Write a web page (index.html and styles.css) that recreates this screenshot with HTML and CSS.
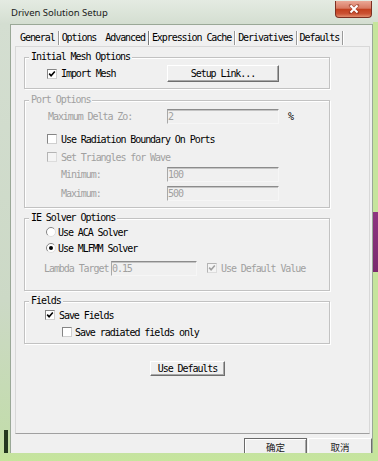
FILE: index.html
```html
<!DOCTYPE html>
<html lang="en">
<head>
    <meta charset="UTF-8">
    <meta name="viewport" content="width=device-width, initial-scale=1.0">
    <title>Driven Solution Setup</title>
    <link rel="stylesheet" href="styles.css">
</head>
<body>
    <div class="window">
        <div class="titlebar">
            <span class="title">Driven Solution Setup</span>
            <div class="close-btn">
                <svg width="12" height="10" viewBox="0 0 12 10">
                    <path d="M2.5 1.5 L9.5 8.5 M9.5 1.5 L2.5 8.5" stroke="#7a2414" stroke-width="3.4" stroke-linecap="round" opacity="0.45"/>
                    <path d="M2.5 1.5 L9.5 8.5 M9.5 1.5 L2.5 8.5" stroke="#fff" stroke-width="2"/>
                </svg>
            </div>
        </div>

        <div class="client">
            <div class="tabs">
                <span class="tab">General</span>
                <span class="tab tab-plain">Options</span>
                <span class="tab tab-active">Advanced</span>
                <span class="tab">Expression Cache</span>
                <span class="tab">Derivatives</span>
                <span class="tab">Defaults</span>
            </div>

            <div class="page">
                <!-- Initial mesh -->
                <div class="group group-mesh">
                    <span class="legend">Initial Mesh Options</span>
                    <div class="row row-tall">
                        <label class="check label-col indent-22">
                            <span class="box"><svg width="8" height="8" viewBox="0 0 8 8"><path d="M1.2 3.6 L3.1 5.7 L6.8 1.5" fill="none" stroke="#000" stroke-width="1.6"/></svg></span>Import Mesh
                        </label>
                        <button class="btn btn-setup">Setup Link...</button>
                    </div>
                </div>

                <!-- Port options (disabled) -->
                <div class="group group-port">
                    <span class="legend disabled">Port Options</span>
                    <div class="row">
                        <span class="label-col indent-23 disabled">Maximum Delta Zo:</span>
                        <span class="field">2</span>
                        <span class="unit">%</span>
                    </div>
                    <div class="row gap-7">
                        <label class="check indent-22">
                            <span class="box"></span>Use Radiation Boundary On Ports
                        </label>
                    </div>
                    <div class="row gap-2">
                        <label class="check indent-22 disabled">
                            <span class="box box-off"></span>Set Triangles for Wave
                        </label>
                    </div>
                    <div class="row gap-1">
                        <span class="label-col indent-36 disabled">Minimum:</span>
                        <span class="field">100</span>
                    </div>
                    <div class="row gap-3">
                        <span class="label-col indent-36 disabled">Maximum:</span>
                        <span class="field">500</span>
                    </div>
                </div>

                <!-- IE solver -->
                <div class="group group-solver">
                    <span class="legend">IE Solver Options</span>
                    <div class="row row-small">
                        <label class="check indent-21">
                            <svg class="radio" width="10" height="10" viewBox="0 0 10 10">
                                <circle cx="5" cy="5" r="4.5" fill="#fff"/>
                                <path d="M1.8 8.2 A4.5 4.5 0 0 1 8.2 1.8" stroke="#858585" fill="none"/>
                                <path d="M8.2 1.8 A4.5 4.5 0 0 1 1.8 8.2" stroke="#dedede" fill="none"/>
                            </svg>Use ACA Solver
                        </label>
                    </div>
                    <div class="row row-small gap-2">
                        <label class="check indent-21">
                            <svg class="radio" width="10" height="10" viewBox="0 0 10 10">
                                <circle cx="5" cy="5" r="4.5" fill="#fff"/>
                                <path d="M1.8 8.2 A4.5 4.5 0 0 1 8.2 1.8" stroke="#858585" fill="none"/>
                                <path d="M8.2 1.8 A4.5 4.5 0 0 1 1.8 8.2" stroke="#dedede" fill="none"/>
                                <circle cx="5" cy="5" r="2" fill="#000"/>
                            </svg>Use MLFMM Solver
                        </label>
                    </div>
                    <div class="row gap-5">
                        <span class="lambda-label disabled">Lambda Target</span>
                        <span class="field field-short">0.15</span>
                        <label class="check check-default disabled">
                            <span class="box box-off"><svg width="8" height="8" viewBox="0 0 8 8"><path d="M1.2 3.6 L3.1 5.7 L6.8 1.5" fill="none" stroke="#a0a0a0" stroke-width="1.6"/></svg></span>Use Default Value
                        </label>
                    </div>
                </div>

                <!-- Fields -->
                <div class="group group-fields">
                    <span class="legend">Fields</span>
                    <div class="row row-small">
                        <label class="check indent-20">
                            <span class="box"><svg width="8" height="8" viewBox="0 0 8 8"><path d="M1.2 3.6 L3.1 5.7 L6.8 1.5" fill="none" stroke="#000" stroke-width="1.6"/></svg></span>Save Fields
                        </label>
                    </div>
                    <div class="row row-small gap-3">
                        <label class="check indent-37">
                            <span class="box box-narrow"></span>Save radiated fields only
                        </label>
                    </div>
                </div>

                <button class="btn btn-defaults">Use Defaults</button>
            </div>

            <div class="actions">
                <button class="btn btn-dialog btn-ok">确定</button>
                <button class="btn btn-dialog btn-cancel">取消</button>
            </div>
        </div>
    </div>
</body>
</html>
```

FILE: styles.css
```css
/* Reset some default styles */
body, button {
    margin: 0;
    padding: 0;
}

/* Body styling */
body {
    width: 378px;
    height: 461px;
    overflow: hidden;
    background-color: #c6e59c;
}

/* Window frame (glass with the desktop showing through) */
.window {
    width: 378px;
    height: 461px;
    background:
        linear-gradient(to bottom, transparent 0, transparent 22px, #c6e59c 22px, #c6e59c 212px, #8e3580 212px, #7a2a6e 272px, #c6e59c 272px) right top / 5px 100% no-repeat,
        linear-gradient(#24381f, #24381f) 4px 430px / 4px 23px no-repeat,
        linear-gradient(to bottom, #e4ebe2 0, #d4ded1 24px, #ccd9c6 300px, #c3dcad 430px, #c6e59c 100%);
    font-family: "DejaVu Sans Mono", monospace;
    font-size: 10px;
    letter-spacing: -1.07px;
    color: #000;
}

/* Title bar */
.titlebar {
    display: flex;
    align-items: flex-start;
    height: 24px;
    padding-left: 11px;
}

.title {
    margin-top: 6px;
    font-family: "Noto Sans", sans-serif;
    font-size: 9.5px;
    line-height: 14px;
    letter-spacing: 0;
    color: #1a1a1a;
}

.close-btn {
    display: flex;
    align-items: center;
    justify-content: center;
    width: 37px;
    height: 17px;
    margin: 1px 6px 0 auto;
    box-sizing: border-box;
    border: 1px solid #7d2f22;
    border-top: none;
    border-radius: 0 0 4px 4px;
    background: linear-gradient(to bottom, #eaa795 0, #d87a62 45%, #c2401f 52%, #cb5234 80%, #e18d6d 100%);
}

/* Client area */
.client {
    width: 363px;
    height: 429px;
    margin-left: 10px;
    box-sizing: border-box;
    border: 1px solid #9aa897;
    border-bottom: none;
    padding-left: 4px;
    background-color: #f0f0f0;
    overflow: hidden;
}

/* Tab strip */
.tabs {
    display: flex;
    align-items: center;
    height: 16px;
    margin: 5px 0 0 2px;
}

.tab {
    padding: 0 3px;
    line-height: 14px;
    border-right: 1px solid #9a9a9a;
    box-shadow: 1px 0 0 #fff;
    white-space: nowrap;
}

.tab-plain {
    padding-right: 4px;
    border-right: none;
    box-shadow: none;
}

.tab-active {
    padding-left: 5px;
    border-right-color: #7a7a7a;
}

/* Tab page */
.page {
    width: 355px;
    height: 388px;
    box-sizing: border-box;
    border: 1px solid #d8d8d8;
    border-bottom-color: #a0a0a0;
    padding: 10px 0 0 8px;
}

/* Group boxes */
.group {
    position: relative;
    width: 306px;
    box-sizing: border-box;
    border: 1px solid #c2c2c2;
    box-shadow: inset 1px 1px 0 #fff, 1px 1px 0 #fff;
}

.group-mesh {
    padding: 7px 0 6px;
}

.group-port {
    margin-top: 11px;
    padding: 7px 0 6px;
}

.group-solver {
    margin-top: 10px;
    padding: 6px 0 14px;
}

.group-fields {
    margin-top: 10px;
    padding: 6px 0 4px;
}

.legend {
    position: absolute;
    top: -7px;
    left: 4px;
    padding: 0 2px;
    line-height: 12px;
    background-color: #f0f0f0;
    white-space: nowrap;
}

/* Rows */
.row {
    display: flex;
    align-items: center;
    height: 16px;
    white-space: nowrap;
}

.row-tall {
    height: 17px;
}

.row-small {
    height: 14px;
}

.gap-1 { margin-top: 1px; }
.gap-2 { margin-top: 2px; }
.gap-3 { margin-top: 3px; }
.gap-5 { margin-top: 5px; }
.gap-7 { margin-top: 7px; }

.label-col {
    width: 142px;
    box-sizing: border-box;
}

.indent-20 { padding-left: 20px; }
.indent-21 { padding-left: 21px; }
.indent-22 { padding-left: 22px; }
.indent-23 { padding-left: 23px; }
.indent-36 { padding-left: 36px; }
.indent-37 { padding-left: 37px; }

.disabled {
    color: #a0a0a0;
}

/* Check boxes and radio buttons */
.check {
    display: flex;
    align-items: center;
}

.box {
    display: flex;
    align-items: center;
    justify-content: center;
    width: 10px;
    height: 10px;
    margin-right: 4px;
    box-sizing: border-box;
    border: 1px solid;
    border-color: #858585 #cfcfcf #cfcfcf #858585;
    background-color: #fff;
}

.box-off {
    border-color: #b4b4b4 #dcdcdc #dcdcdc #b4b4b4;
    background-color: #f4f4f4;
}

.box-narrow {
    margin-right: 3px;
}

.radio {
    margin-right: 2px;
}

.check-default {
    margin-left: 10px;
}

/* Edit boxes */
.field {
    width: 112px;
    height: 15px;
    box-sizing: border-box;
    border: 1px solid;
    border-color: #8c8c8c #f6f6f6 #f6f6f6 #a8a8a8;
    box-shadow: inset 0 1px 0 #c4c4c4;
    background-color: #f0f0f0;
    color: #a0a0a0;
    line-height: 13px;
}

.field-short {
    width: 86px;
}

.lambda-label {
    padding-left: 19px;
    width: 67px;
}

.unit {
    margin-left: 9px;
}

/* Buttons */
.btn {
    display: block;
    box-sizing: border-box;
    border: 1px solid;
    border-color: #fff #6e6e6e #6e6e6e #fff;
    box-shadow: inset -1px -1px 0 #a8a8a8;
    background-color: #f0f0f0;
    font: inherit;
    letter-spacing: inherit;
    color: #000;
    cursor: pointer;
}

.btn-setup {
    width: 112px;
    height: 17px;
}

.btn-defaults {
    width: 75px;
    height: 15px;
    margin: 17px 0 0 126px;
    line-height: 12px;
}

/* Dialog buttons (cut off by the bottom of the window) */
.actions {
    display: flex;
    margin: 4px 0 0 229px;
}

.btn-dialog {
    height: 15px;
    padding-top: 2px;
    border-bottom: none;
    line-height: 11px;
    font-family: "Noto Sans CJK SC", sans-serif;
    font-size: 9.5px;
    letter-spacing: 0;
    color: #222;
}

.btn-ok {
    width: 63px;
    border-color: #6a6a6a;
    box-shadow: inset 1px 1px 0 #fff, inset -1px 0 0 #a8a8a8;
}

.btn-cancel {
    width: 64px;
    margin-left: 1px;
    box-shadow: none;
}
```
